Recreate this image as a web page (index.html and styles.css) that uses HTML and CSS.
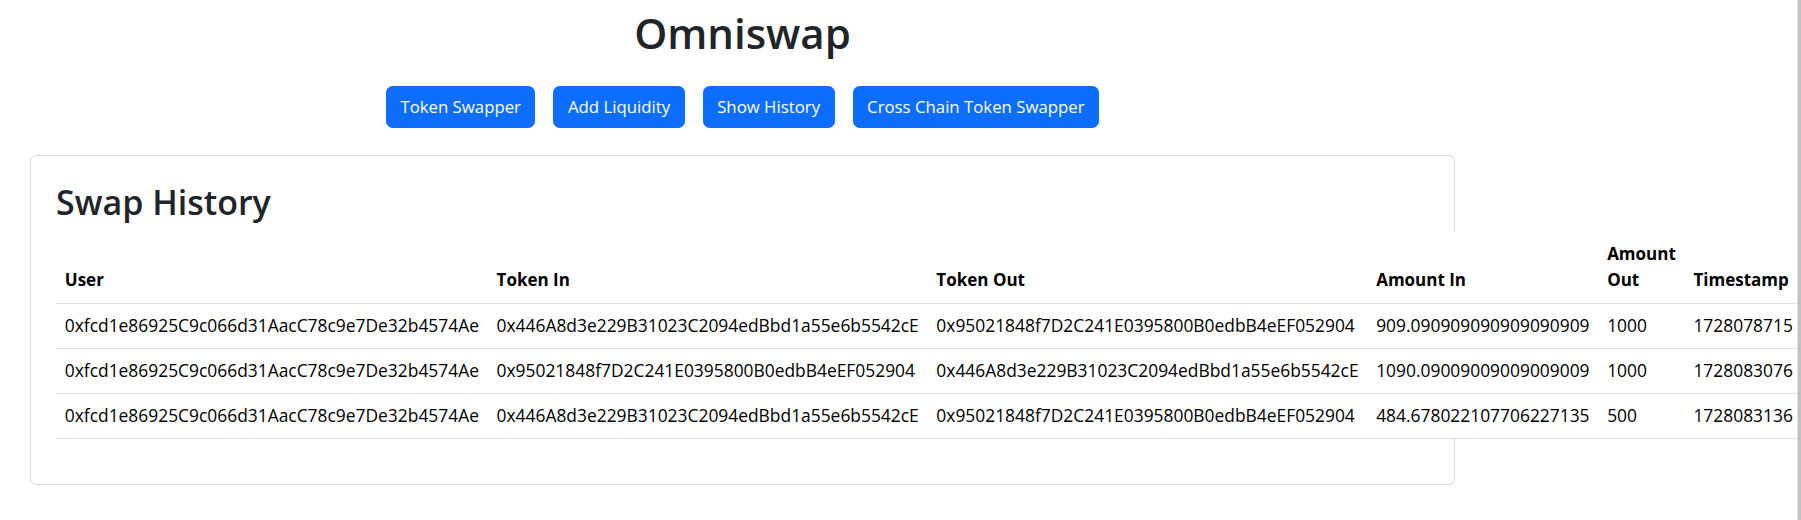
FILE: index.html
```html
<!DOCTYPE html>
<html lang="en">
<head>
<meta charset="utf-8">
<title>Omniswap</title>
<link rel="stylesheet" href="styles.css">
</head>
<body>
<div class="page">
  <h1 class="title">Omniswap</h1>
  <nav class="actions">
    <button class="btn">Token Swapper</button>
    <button class="btn">Add Liquidity</button>
    <button class="btn">Show History</button>
    <button class="btn">Cross Chain Token Swapper</button>
  </nav>
  <section class="card">
    <div class="card-body">
      <h2 class="card-title">Swap History</h2>
      <table class="history">
        <thead>
          <tr>
            <th>User</th>
            <th>Token In</th>
            <th>Token Out</th>
            <th>Amount In</th>
            <th>Amount Out</th>
            <th>Timestamp</th>
          </tr>
        </thead>
        <tbody>
          <tr>
            <td>0xfcd1e86925C9c066d31AacC78c9e7De32b4574Ae</td>
            <td>0x446A8d3e229B31023C2094edBbd1a55e6b5542cE</td>
            <td>0x95021848f7D2C241E0395800B0edbB4eEF052904</td>
            <td>909.090909090909090909</td>
            <td>1000</td>
            <td>1728078715</td>
          </tr>
          <tr>
            <td>0xfcd1e86925C9c066d31AacC78c9e7De32b4574Ae</td>
            <td>0x95021848f7D2C241E0395800B0edbB4eEF052904</td>
            <td>0x446A8d3e229B31023C2094edBbd1a55e6b5542cE</td>
            <td>1090.09009009009009009</td>
            <td>1000</td>
            <td>1728083076</td>
          </tr>
          <tr>
            <td>0xfcd1e86925C9c066d31AacC78c9e7De32b4574Ae</td>
            <td>0x446A8d3e229B31023C2094edBbd1a55e6b5542cE</td>
            <td>0x95021848f7D2C241E0395800B0edbB4eEF052904</td>
            <td>484.678022107706227135</td>
            <td>500</td>
            <td>1728083136</td>
          </tr>
        </tbody>
      </table>
    </div>
  </section>
</div>
<div class="scroll-edge"></div>
</body>
</html>
```

FILE: styles.css
```css
html, body {
  margin: 0;
  padding: 0;
  background: #fff;
}

body {
  font-family: "Open Sans", "Liberation Sans", sans-serif;
  font-size: 17.4px;
  line-height: 26.4px;
  color: #212529;
}

.page {
  width: 1485px;
}

.title {
  margin: 7px 0 0;
  font-size: 42px;
  line-height: 52px;
  font-weight: 600;
  text-align: center;
  color: #212529;
}

.actions {
  display: flex;
  justify-content: center;
  gap: 18px;
  margin-top: 27px;
}

.btn {
  font-family: inherit;
  font-size: 16.8px;
  line-height: 26px;
  padding: 6.85px 13.5px;
  border: 1px solid #0d6efd;
  border-radius: 6.6px;
  background: #0d6efd;
  color: #fff;
  cursor: pointer;
}

.card {
  margin: 27px 30px 0;
  border: 1px solid #d6d7d8;
  border-radius: 6.6px;
  background: #fff;
}

.card-body {
  padding: 25px 25px 28px;
}

.card-title {
  margin: 0 0 9.6px;
  font-size: 34px;
  line-height: 42px;
  font-weight: 600;
  color: #212529;
}

.history {
  width: 100%;
  border-collapse: collapse;
  margin-bottom: 17.6px;
  background: #fff;
  color: #000;
  vertical-align: top;
}

.history th,
.history td {
  padding: 8.8px;
  border-bottom: 1px solid #dee2e6;
  text-align: left;
  background: #fff;
}

.history th {
  font-size: 17px;
  font-weight: 700;
  vertical-align: bottom;
}

.history td {
  white-space: nowrap;
  vertical-align: middle;
}

.scroll-edge {
  position: fixed;
  top: 0;
  right: 0;
  bottom: 0;
  width: 3px;
  background: #c1c1c1;
  border-left: 1px solid #e4e4e4;
}
```
